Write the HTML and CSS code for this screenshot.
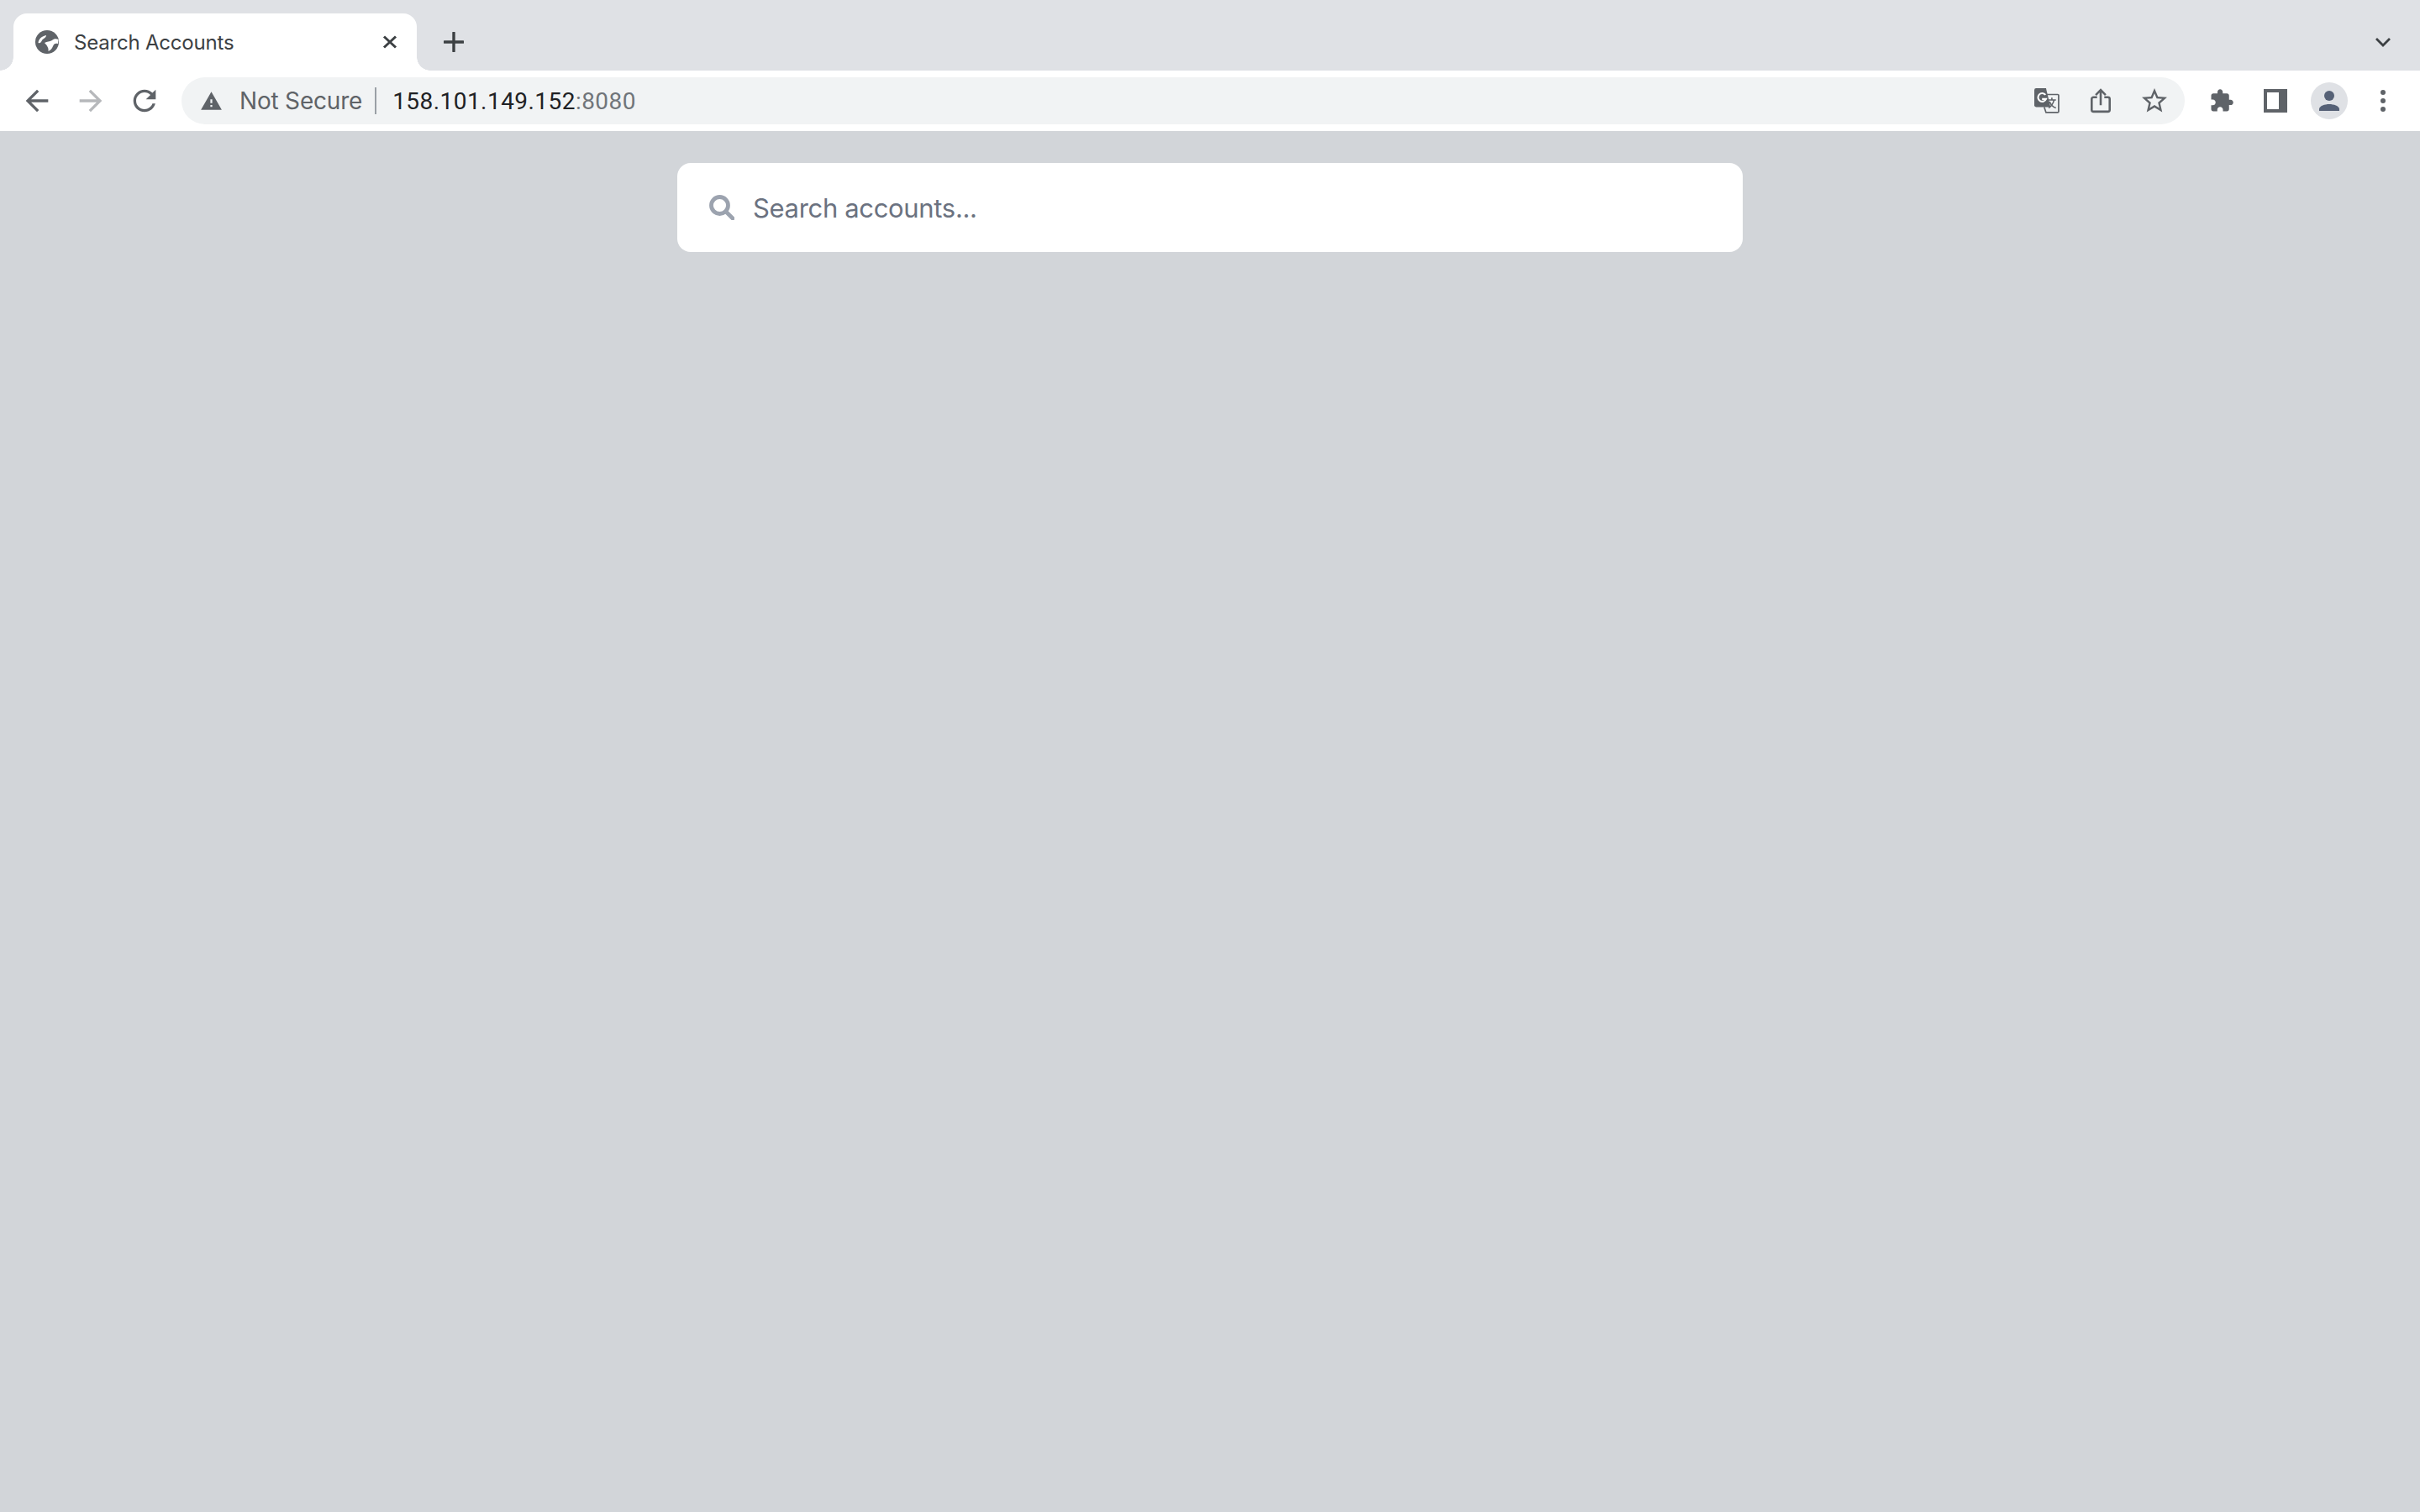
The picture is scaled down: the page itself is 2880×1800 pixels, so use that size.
FILE: index.html
```html
<!DOCTYPE html>
<html lang="en">
<head>
<meta charset="utf-8">
<title>Search Accounts</title>
<link rel="stylesheet" href="styles.css">
</head>
<body>
<div class="browser">
  <header class="tabstrip">
    <div class="tab">
      <svg class="favicon" viewBox="0 0 28 28"><circle cx="14" cy="14" r="14" fill="#5f6368"/><path d="M3.500 15C4 10 8 7 13 6c0 3-4 4-5 6-1 2-2 4-4.500 3z" fill="#fff"/><path d="M11 15c3-2 6-1 9-3 2-2 5-2 7.500-1l-.5 5c-3-1-5 0-6 3-1 3-3 5-5.500 6 .5-3-.5-6-4.500-10z" fill="#fff"/></svg>
      <span class="tab-title">Search Accounts</span>
      <svg class="tab-close" viewBox="0 0 18 16"><path d="M2 1.500l14 13M16 1.500l-14 13" stroke="#3c4043" stroke-width="3" fill="none"/></svg>
    </div>
    <svg class="new-tab" viewBox="0 0 24 24"><path d="M12 1v22M1 12h22" stroke="#3c4043" stroke-width="3.400" stroke-linecap="round" fill="none"/></svg>
    <svg class="tab-search" viewBox="0 0 18 11"><path d="M1 1l8 8 8-8" stroke="#3c4043" stroke-width="2.800" fill="none"/></svg>
  </header>

  <nav class="toolbar">
    <span class="tool"><svg class="i40" viewBox="0 0 24 24"><path fill="#5f6368" d="M20 11H7.830l5.590-5.590L12 4l-8 8 8 8 1.410-1.410L7.830 13H20v-2z"/></svg></span>
    <span class="tool"><svg class="i40" viewBox="0 0 24 24"><path fill="#b6b8bb" d="M4 11h12.170l-5.590-5.590L12 4l8 8-8 8-1.410-1.410L16.170 13H4v-2z"/></svg></span>
    <span class="tool"><svg class="i40" viewBox="0 0 24 24"><path fill="#5f6368" d="M17.650 6.350C16.200 4.900 14.210 4 12 4c-4.420 0-7.990 3.580-7.990 8s3.570 8 7.990 8c3.730 0 6.840-2.550 7.730-6h-2.080c-.82 2.330-3.040 4-5.650 4-3.310 0-6-2.690-6-6s2.690-6 6-6c1.660 0 3.140.69 4.220 1.780L13 11h7V4l-2.350 2.350z"/></svg></span>

    <div class="omnibox">
      <svg class="warn" viewBox="0 0 24 24"><path fill="#5f6368" d="M1 21h22L12 2 1 21zm12-3h-2v-2h2v2zm0-4h-2v-4h2v4z"/></svg>
      <span class="not-secure">Not Secure</span>
      <span class="divider"></span>
      <span class="url">158.101.149.152<span class="port">:8080</span></span>
      <span class="omni-tools">
        <span class="tool">
          <svg class="i32" viewBox="0 0 28 28"><path fill="#5f6368" d="M2 0h11l5 21H2a2 2 0 0 1-2-2V2a2 2 0 0 1 2-2z"/><path fill="none" stroke="#5f6368" stroke-width="1.600" d="M11 7h15a1 1 0 0 1 1 1v18a1 1 0 0 1-1 1H13l-2-6"/><path fill="none" stroke="#fff" stroke-width="2" d="M12.400 7.400A4.600 4.600 0 1 0 13 12H8.600"/><path fill="none" stroke="#5f6368" stroke-width="1.500" d="M15 13h9M19.500 10.500V13M22 13c-1 4-3 7-6 9M17 15c1 3 4 6 7 7"/></svg>
        </span>
        <span class="tool">
          <svg class="i32" viewBox="0 0 24 28"><path fill="none" stroke="#5f6368" stroke-width="2.400" stroke-linejoin="round" d="M8 10H4a2 2 0 0 0-2 2v12a2 2 0 0 0 2 2h16a2 2 0 0 0 2-2V12a2 2 0 0 0-2-2h-4"/><path fill="none" stroke="#5f6368" stroke-width="2.400" d="M12 19V2M6.500 7.500L12 2l5.500 5.500"/></svg>
        </span>
        <span class="tool"><svg class="i36" viewBox="0 0 24 24"><path fill="#5f6368" d="M22 9.240l-7.190-.62L12 2 9.190 8.630 2 9.240l5.460 4.730L5.820 21 12 17.270 18.180 21l-1.630-7.030L22 9.240zM12 15.400l-3.760 2.270 1-4.280-3.320-2.880 4.380-.38L12 6.100l1.710 4.040 4.380.38-3.320 2.880 1 4.280L12 15.400z"/></svg></span>
      </span>
    </div>

    <span class="tool"><svg class="i32" viewBox="0 0 24 24"><path fill="#5f6368" d="M20.500 11H19V7c0-1.100-.9-2-2-2h-4V3.500C13 2.120 11.880 1 10.500 1S8 2.120 8 3.500V5H4c-1.100 0-1.990.9-1.990 2v3.800H3.500c1.490 0 2.700 1.210 2.700 2.700s-1.210 2.700-2.700 2.700H2V20c0 1.100.9 2 2 2h3.800v-1.500c0-1.490 1.210-2.700 2.700-2.700 1.490 0 2.700 1.210 2.700 2.700V22H17c1.100 0 2-.9 2-2v-4h1.500c1.380 0 2.500-1.120 2.500-2.500S21.880 11 20.500 11z"/></svg></span>
    <span class="tool"><span class="side-panel"></span></span>
    <span class="tool"><span class="avatar"><svg class="person" viewBox="0 0 24 24"><circle cx="12" cy="6" r="6" fill="#566176"/><path fill="#566176" d="M0 24v-2c0-4 7-6 12-6s12 2 12 6v2z"/></svg></span></span>
    <span class="tool"><svg class="dots" viewBox="0 0 6 26"><circle cx="3" cy="3" r="3" fill="#5f6368"/><circle cx="3" cy="13" r="3" fill="#5f6368"/><circle cx="3" cy="23" r="3" fill="#5f6368"/></svg></span>
  </nav>

  <main class="page">
    <div class="search-box">
      <svg class="search-icon" viewBox="0 0 30 30"><circle cx="12.500" cy="12.500" r="10" fill="none" stroke="#9ca3af" stroke-width="4.800"/><path d="M20 20l8 8" stroke="#9ca3af" stroke-width="4.800" stroke-linecap="round"/></svg>
      <span class="placeholder">Search accounts...</span>
    </div>
  </main>
</div>
</body>
</html>
```

FILE: styles.css
```css
* { box-sizing: border-box; }
html, body { margin: 0; height: 100%; }
body { font-family: Inter, "Liberation Sans", sans-serif; background: #d2d5d9; overflow: hidden; }
.browser { display: flex; flex-direction: column; height: 100vh; }

.tabstrip { flex: none; height: 84px; background: #dfe1e5; display: flex; align-items: flex-end; padding-left: 16px; padding-right: 35px; }
.tab { position: relative; width: 480px; height: 68px; background: #fff; border-radius: 16px 16px 0 0; display: flex; align-items: center; padding: 0 14px 0 26px; }
.tab::before, .tab::after { content: ""; position: absolute; bottom: 0; width: 16px; height: 16px; }
.tab::before { left: -16px; background: radial-gradient(circle at 0 0, #dfe1e5 15.5px, #fff 16px); }
.tab::after { right: -16px; background: radial-gradient(circle at 100% 0, #dfe1e5 15.5px, #fff 16px); }
.favicon { width: 28px; height: 28px; flex: none; }
.tab-title { margin-left: 18px; font-size: 24px; letter-spacing: -0.2px; color: #3c4043; flex: 1; white-space: nowrap; }
.tab-close { width: 18px; height: 16px; flex: none; margin-right: 9px; }
.new-tab { width: 24px; height: 24px; margin: 0 0 22px 32px; flex: none; }
.tab-search { width: 18px; height: 11px; margin: 0 0 28px auto; flex: none; }

.toolbar { flex: none; height: 72px; background: #fff; display: flex; align-items: center; padding: 0 12px; }
.tool { width: 64px; height: 56px; flex: none; display: flex; align-items: center; justify-content: center; }
.i40 { width: 40px; height: 40px; }
.i36 { width: 36px; height: 36px; }
.i32 { width: 30px; height: 30px; }

.omnibox { flex: 1; height: 56px; margin: 0 12px; background: #f1f3f4; border-radius: 28px; display: flex; align-items: center; padding: 0 4px 0 22px; color: #5f6368; font-size: 28px; }
.warn { width: 27px; height: 27px; flex: none; }
.not-secure { margin-left: 20px; white-space: nowrap; letter-spacing: -0.2px; }
.divider { width: 2px; height: 32px; background: #9aa0a6; margin: 0 19px 0 15px; flex: none; }
.url { font-family: Roboto, Inter, sans-serif; letter-spacing: 0.45px; color: #202124; white-space: nowrap; }
.port { color: #70757a; }
.omni-tools { margin-left: auto; display: flex; }

.side-panel { width: 28px; height: 28px; border: solid #5f6368; border-width: 4px 10px 4px 4px; background: #fff; }
.avatar { width: 44px; height: 44px; border-radius: 50%; background: #dfe1e5; display: flex; align-items: center; justify-content: center; }
.person { width: 24px; height: 24px; }
.dots { width: 6px; height: 26px; }

.page { flex: 1; background: #d2d5d9; display: flex; flex-direction: column; align-items: center; padding-top: 38px; }
.search-box { width: 1268px; height: 106px; background: #fff; border-radius: 16px; display: flex; align-items: center; padding-left: 38px; }
.search-icon { width: 30px; height: 30px; flex: none; }
.placeholder { margin-left: 22px; font-size: 31px; letter-spacing: -0.33px; color: #6b7280; white-space: nowrap; }
```
